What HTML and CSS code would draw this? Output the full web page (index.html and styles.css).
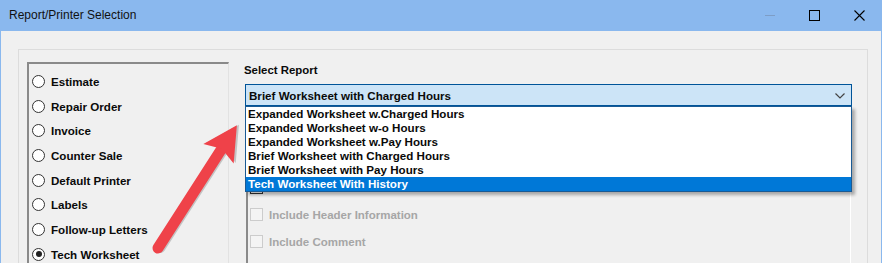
FILE: index.html
```html
<!DOCTYPE html>
<html>
<head>
<meta charset="utf-8">
<link rel="stylesheet" href="styles.css">
</head>
<body>
<div class="window">
  <div class="titlebar">
    <span class="title">Report/Printer Selection</span>
    <div class="controls">
      <span class="ctl"><svg width="10" height="10" viewBox="0 0 10 10"><line x1="0" y1="5.5" x2="10" y2="5.5" stroke="#7d9dc6" stroke-width="1"/></svg></span>
      <span class="ctl"><svg width="11" height="11" viewBox="0 0 11 11"><rect x="0.5" y="0.5" width="10" height="10" fill="none" stroke="#000" stroke-width="1"/></svg></span>
      <span class="ctl"><svg width="11" height="11" viewBox="0 0 11 11"><path d="M0.5 0.5 L10.5 10.5 M10.5 0.5 L0.5 10.5" stroke="#000" stroke-width="1.1" fill="none"/></svg></span>
    </div>
  </div>
  <div class="client">
    <div class="group">
      <div class="radios">
        <div class="radio"><span class="dot"></span><span>Estimate</span></div>
        <div class="radio"><span class="dot"></span><span>Repair Order</span></div>
        <div class="radio"><span class="dot"></span><span>Invoice</span></div>
        <div class="radio"><span class="dot"></span><span>Counter Sale</span></div>
        <div class="radio"><span class="dot"></span><span>Default Printer</span></div>
        <div class="radio"><span class="dot"></span><span>Labels</span></div>
        <div class="radio"><span class="dot"></span><span>Follow-up Letters</span></div>
        <div class="radio"><span class="dot checked"></span><span>Tech Worksheet</span></div>
      </div>
      <div class="right">
        <div class="label">Select Report</div>
        <div class="combo-wrap">
          <div class="combo">
            <span>Brief Worksheet with Charged Hours</span>
            <svg class="chev" width="10" height="6" viewBox="0 0 10 6"><path d="M0.5 0.5 L5 5 L9.5 0.5" stroke="#444" stroke-width="1.2" fill="none"/></svg>
          </div>
          <ul class="dropdown">
            <li>Expanded Worksheet w.Charged Hours</li>
            <li>Expanded Worksheet w-o Hours</li>
            <li>Expanded Worksheet w.Pay Hours</li>
            <li>Brief Worksheet with Charged Hours</li>
            <li>Brief Worksheet with Pay Hours</li>
            <li class="sel">Tech Worksheet With History</li>
          </ul>
        </div>
        <div class="options">
          <div class="check"><span class="box"></span></div>
          <div class="check"><span class="box"></span></div>
          <div class="check"><span class="box"></span></div>
          <div class="check disabled"><span class="box"></span><span>Include Header Information</span></div>
          <div class="check disabled"><span class="box"></span><span>Include Comment</span></div>
        </div>
      </div>
    </div>
  </div>
  <svg class="arrow" width="882" height="263" viewBox="0 0 882 263">
    <g transform="translate(158,248) rotate(-57.3)">
      <g transform="translate(1.5,1.5)" opacity="0.18">
        <line x1="0" y1="0" x2="116" y2="0" stroke="#000" stroke-width="11" stroke-linecap="round"/>
        <polygon points="146,0 112,-18 118,0 112,18" fill="#000"/>
      </g>
      <line x1="0" y1="0" x2="116" y2="0" stroke="#ef4249" stroke-width="11" stroke-linecap="round"/>
      <polygon points="146,0 112,-18 118,0 112,18" fill="#ef4249"/>
    </g>
  </svg>
</div>
</body>
</html>
```
FILE: styles.css
```css
* { box-sizing: border-box; }
html, body { margin: 0; padding: 0; }
body {
  font-family: "Liberation Sans", Arial, sans-serif;
  background: #f0f0f0;
}
.window {
  position: relative;
  width: 882px;
  height: 263px;
  overflow: hidden;
  background: #f0f0f0;
  border-left: 1px solid #8ab8ee;
  border-right: 1px solid #8ab8ee;
}
.titlebar {
  height: 31px;
  background: #8ab8ee;
  display: flex;
  justify-content: space-between;
  align-items: stretch;
  margin: 0 -1px;
  padding-left: 9px;
}
.title {
  font-size: 12px;
  color: #111;
  line-height: 31px;
}
.controls { display: flex; }
.ctl {
  width: 45px;
  display: flex;
  align-items: center;
  justify-content: center;
  padding-bottom: 1px;
}
.ctl svg { display: block; }
.client {
  padding: 18px 0 0 17px;
}
.group {
  width: 850px;
  height: 260px;
  border: 1px solid #dcdcdc;
  border-bottom: none;
  display: flex;
  padding: 12px 0 0 8px;
  gap: 15px;
}
.radios {
  width: 202px;
  height: 240px;
  border-top: 2px solid #8a8a8a;
  border-left: 2px solid #8a8a8a;
  border-right: 1px solid #e2e2e2;
  padding: 5px 0 0 3px;
}
.radio {
  height: 24.7px;
  display: flex;
  align-items: center;
  font-size: 11.6px;
  font-weight: bold;
  color: #0a0a0a;
}
.dot {
  width: 13px;
  height: 13px;
  border: 1px solid #333;
  border-radius: 50%;
  background: #fff;
  margin-right: 6px;
  position: relative;
  flex: none;
}
.dot.checked::after {
  content: "";
  position: absolute;
  left: 2.5px;
  top: 2.5px;
  width: 6px;
  height: 6px;
  border-radius: 50%;
  background: #222;
}
.right {
  width: 608px;
  display: flex;
  flex-direction: column;
}
.label {
  font-size: 11.4px;
  font-weight: bold;
  line-height: 16px;
  color: #0a0a0a;
  margin-bottom: 6px;
}
.combo-wrap {
  position: relative;
  margin-left: 1px;
  width: 607px;
}
.combo {
  height: 22px;
  background: #cce4f7;
  border: 1px solid #005499;
  display: flex;
  align-items: center;
  justify-content: space-between;
  padding: 0 6px 0 3px;
  font-size: 11.6px;
  font-weight: bold;
  color: #0a0a0a;
}
.chev { display: block; margin-top: 2px; }
.dropdown {
  position: absolute;
  left: 0;
  top: 22px;
  width: 607px;
  margin: 0;
  padding: 0;
  list-style: none;
  background: #fff;
  border: 1px solid #1a5a94;
  box-shadow: 3px 3px 3px rgba(0, 0, 0, 0.3);
  z-index: 2;
}
.dropdown li {
  height: 14px;
  line-height: 14px;
  padding-left: 2px;
  font-size: 11.6px;
  font-weight: bold;
  color: #0a0a0a;
  white-space: nowrap;
}
.dropdown li.sel {
  background: #0078d7;
  color: #fff;
}
.options {
  margin-top: 10px;
  margin-left: 2px;
  width: 605px;
  height: 160px;
  border-top: 2px solid #8a8a8a;
  border-left: 2px solid #8a8a8a;
  border-right: 1px solid #ffffff;
  padding: 2px 0 0 2px;
}
.check {
  height: 27px;
  display: flex;
  align-items: center;
  font-size: 11.5px;
  font-weight: bold;
  color: #111;
}
.box {
  width: 13px;
  height: 13px;
  border: 1px solid #333;
  background: #fff;
  margin-right: 6px;
  flex: none;
}
.check.disabled { color: #a6a6a6; }
.check.disabled .box {
  border-color: #cccccc;
  background: #f4f4f4;
}
.arrow {
  position: absolute;
  left: -1px;
  top: 0;
  pointer-events: none;
  z-index: 5;
}
```
